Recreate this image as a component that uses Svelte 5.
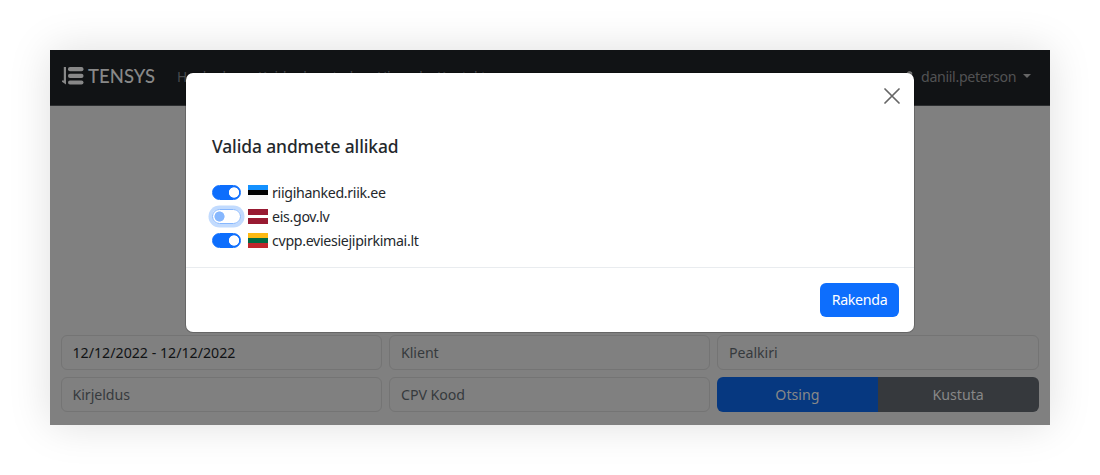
<script>
  const sources = [
    { name: 'riigihanked.riik.ee', on: true, focus: false, colors: ['#1491ff', '#000', '#f5f5f5'] },
    { name: 'eis.gov.lv', on: false, focus: true, colors: ['#981a32', '#fff', '#981a32'] },
    { name: 'cvpp.eviesiejipirkimai.lt', on: true, focus: false, colors: ['#fdb913', '#006a44', '#c1272d'] }
  ];
  const bands = [[[0, 5], [5, 5], [10, 5]], [[0, 6], [6, 3], [9, 6]], [[0, 5], [5, 5], [10, 5]]];
</script>

<div class="page">
  <div class="app">
    <header>
      <div class="brand">
        <svg width="22" height="18" viewBox="0 0 22 18" fill="#888">
          <path d="M1.8 0H4V17.4L0 14.8V13.4H1.8Z" />
          <rect x="6" y="0" width="15.5" height="4.2" rx="2" />
          <rect x="6" y="6.8" width="15.5" height="4.2" rx="2" />
          <rect x="6" y="13.4" width="15.5" height="4.2" rx="2" />
        </svg>
        <span class="word">TENSYS</span>
      </div>
      <nav><span>Hanked</span><span class="how">Kuidas kasutada</span><span class="price">Hinnad</span><span>Kontakt</span></nav>
      <div class="user">
        <span class="lang">E</span>
        <svg width="9" height="13" viewBox="0 0 9 13" fill="#777"><circle cx="4.5" cy="3" r="2.8" /><path d="M0 13V10Q0 7 4.5 7T9 10V13Z" /></svg>
        <span class="name">daniil.peterson</span><i class="caret"></i>
      </div>
    </header>
    <main>
      <div class="field value"><span>12/12/2022 - 12/12/2022</span></div>
      <div class="field"><span>Klient</span></div>
      <div class="field"><span>Pealkiri</span></div>
      <div class="field"><span>Kirjeldus</span></div>
      <div class="field"><span>CPV Kood</span></div>
      <div class="actions"><button class="search">Otsing</button><button class="clear">Kustuta</button></div>
    </main>
    <div class="modal">
      <div class="body">
        <svg class="close" width="16" height="16" viewBox="0 0 16 16"><path d="M1 1L15 15M15 1L1 15" stroke="#666" stroke-width="1.7" stroke-linecap="round" /></svg>
        <h5>Valida andmete allikad</h5>
        {#each sources as s, i}
          <div class="row">
            <span class="switch" class:on={s.on} class:focus={s.focus}></span>
            <svg class="flag" width="20" height="15" viewBox="0 0 20 15" shape-rendering="crispEdges">
              {#each bands[i] as b, j}<rect y={b[0]} width="20" height={b[1]} fill={s.colors[j]} />{/each}
            </svg>
            <span class="src">{s.name}</span>
          </div>
        {/each}
      </div>
      <footer><button class="apply">Rakenda</button></footer>
    </div>
  </div>
</div>

<style>
  .page { box-sizing: border-box; width: 1100px; height: 475px; padding: 50px; background: #fff; overflow: hidden; font: 14.2px/24px "Noto Sans", sans-serif; }
  .app { position: relative; display: flex; flex-direction: column; width: 1000px; height: 375px; background: #808080; box-shadow: 0 0 40px rgba(0,0,0,.13); }
  header { box-sizing: border-box; display: flex; align-items: center; height: 56px; padding: 0 18px 4px 12px; background: #111315; border-bottom: 1px solid #2c2e30; color: #515253; white-space: nowrap; }
  .brand { display: flex; align-items: center; gap: 4px; width: 115px; }
  .word { color: #888; font: 500 18.5px/22px Lato, sans-serif; letter-spacing: .05px; }
  nav { display: flex; padding-top: 3px; font-size: 13.8px; letter-spacing: -.25px; color: #494c4f; }
  nav span { width: 60px; }
  nav span:first-child { width: 81px; }
  nav .how { width: 119px; }
  .user { display: flex; align-items: center; margin-left: auto; padding-top: 3px; letter-spacing: -.33px; }
  .lang { width: 42px; padding-top: 1px; }
  .user svg { margin-right: 7px; }
  .name { width: 95px; }
  .caret { margin: 0 1px 2px 7px; border: 4.5px solid transparent; border-top-color: #666; border-bottom: 0; }
  main { display: grid; grid-template-columns: 321.5px 321px 321.5px; gap: 7px; margin-top: auto; padding: 0 10.5px 13px; grid-auto-rows: 35px; letter-spacing: -.05px; }
  .field { box-sizing: border-box; padding: 5px 11px; border: 1px solid #747474; border-radius: 6px; color: #363a3d; }
  .field.value { color: #111315; letter-spacing: 0; }
  .actions { display: flex; border-radius: 6px; overflow: hidden; }
  button { border: 0; padding: 0; font: inherit; }
  .actions button { flex: 1; color: #888; }
  .search { background: #063880; }
  .clear { background: #36393d; }
  .modal { position: absolute; left: 136px; top: 23px; width: 728px; height: 259px; background: #fff; border-radius: 7px; color: #24282c; box-shadow: 0 0 0 1px rgba(0,0,0,.2); }
  .body { position: relative; box-sizing: border-box; height: 195px; padding: 61px 26px 0; border-bottom: 1px solid #e9ecef; }
  .close { position: absolute; right: 14px; top: 15px; }
  h5 { margin: 0 0 21px; font-weight: 500; font-size: 17.4px; line-height: 25px; letter-spacing: -.1px; color: #24282c; }
  .row { display: flex; align-items: center; height: 24px; }
  .src { letter-spacing: -.32px; padding-top: 1px; }
  .switch { box-sizing: border-box; width: 29px; height: 15px; border: 1px solid #b9bdc1; border-radius: 8px; background: radial-gradient(circle at 6.5px 6.5px, #86b7fe 4.7px, #fff 5.4px); }
  .switch.on { border-color: #0d6efd; background: radial-gradient(circle at 21px 6.5px, #fff 4.8px, #0d6efd 5.5px); }
  .switch.focus { border-color: #86b7fe; box-shadow: 0 0 0 3.5px #c2dbfe; }
  .flag { margin: 0 4px 0 7px; }
  footer { display: flex; justify-content: flex-end; padding: 15px; }
  .apply { width: 79px; height: 34px; border-radius: 6px; background: #0d6efd; color: #fff; letter-spacing: -.3px; }
</style>
